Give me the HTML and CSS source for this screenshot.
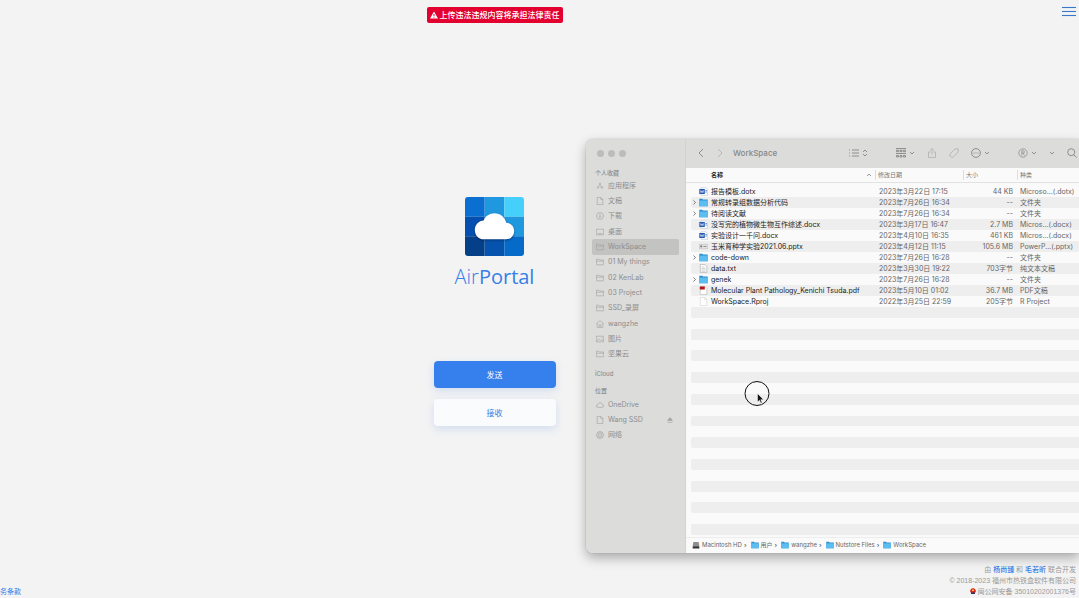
FILE: index.html
```
<!DOCTYPE html>
<html lang="zh-CN">
<head>
    <meta charset="UTF-8">
    <title>AirPortal</title>
    <link rel="stylesheet" href="styles.css">
</head>
<body>
<!-- 图标 -->
<svg class="sprite" aria-hidden="true">
    <symbol id="i-right" viewBox="0 0 6 10"><path d="M1 1l4 4-4 4"/></symbol>
    <symbol id="i-left" viewBox="0 0 6 10"><path d="M5 1L1 5l4 4"/></symbol>
    <symbol id="i-down" viewBox="0 0 6 10"><path d="M1 4l2 2 2-2"/></symbol>
    <symbol id="i-updown" viewBox="0 0 6 10"><path d="M1 4l2-2 2 2M1 6l2 2 2-2"/></symbol>
    <symbol id="i-list" viewBox="0 0 10 10"><path d="M3 2h7M3 5h7M3 8h7M0 2h1M0 5h1M0 8h1"/></symbol>
    <symbol id="i-group" viewBox="0 0 10 10"><path d="M0 .5h10M0 5.500h10"/><path d="M.5 2.200h2v1.500h-2zM4 2.200h2v1.500H4zM7.500 2.200h2v1.500h-2zM.5 7.500h2V9h-2zM4 7.500h2V9H4zM7.500 7.500h2V9h-2z"/></symbol>
    <symbol id="i-share" viewBox="0 0 10 10"><path d="M3.500 4H1.500v5.500h7V4H6.500M5 6.500V.7M3 2.500l2-2 2 2"/></symbol>
    <symbol id="i-tag" viewBox="0 0 10 10"><path d="M1 6l5-5 3-.2.3 3-5 5.200q-1 .8-2 0L1 8q-.8-1 0-2z"/></symbol>
    <symbol id="i-more" viewBox="0 0 10 10"><circle cx="5" cy="5" r="4.400"/><path d="M2.500 5h1M4.500 5h1M6.500 5h1"/></symbol>
    <symbol id="i-reg" viewBox="0 0 10 10"><circle cx="5" cy="5" r="4.200" stroke-width=".7"/><path stroke-width=".7" d="M3.800 7.500V2.700h1.400q1.200 0 1.200 1.200T5.200 5.100H3.800M5.200 5.100l1.300 2.400"/></symbol>
    <symbol id="i-search" viewBox="0 0 10 10"><circle cx="4.200" cy="4.200" r="3.500"/><path d="M6.800 6.800l2.800 2.800"/></symbol>
    <symbol id="i-app" viewBox="0 0 10 10"><path d="M5.600 1L2 8.500M4.400 1L8 8.500M.8 6.500h3M5.500 6.500h3.700"/></symbol>
    <symbol id="i-doc" viewBox="0 0 10 10"><path d="M1.500.5H6l2.500 2.500v6.500h-7zM6 .5V3h2.500"/></symbol>
    <symbol id="i-download" viewBox="0 0 10 10"><circle cx="5" cy="5" r="4.300"/><path d="M5 2.500v4.500M3.300 5.300L5 7l1.700-1.700"/></symbol>
    <symbol id="i-desktop" viewBox="0 0 10 10"><path d="M.5 1.500h9v7h-9zM2 7h6"/></symbol>
    <symbol id="i-folder" viewBox="0 0 10 10"><path d="M.5 8.500v-7h3l1 1h5v6zM.5 4h9"/></symbol>
    <symbol id="i-home" viewBox="0 0 10 10"><path d="M.3 5L5 .8 9.700 5M1.500 4v5.200h7V4M4 9V6h2v3"/></symbol>
    <symbol id="i-image" viewBox="0 0 10 10"><path d="M.5 1.500h9v7h-9zM.5 8l3-3 2 2 1.500-1.500 2.500 2.500M7 3.500h1"/></symbol>
    <symbol id="i-cloud" viewBox="0 0 10 10"><path d="M2.500 8q-2 0-2-1.800T2.500 4.500Q3 2 5.200 2T7.700 4.500q1.800 0 1.800 1.700T7.700 8z"/></symbol>
    <symbol id="i-globe" viewBox="0 0 10 10"><circle cx="5" cy="5" r="4.300"/><path stroke-width=".5" d="M1 5h8M5 1q-4 4 0 8M5 1q4 4 0 8M2 2.500q3 2 6 0M2 7.500q3-2 6 0"/></symbol>
    <symbol id="i-eject" viewBox="0 0 10 10"><path fill="#a2a2a2" d="M5 2l3 3.500H2z"/><path d="M2 8h6"/></symbol>
    <symbol id="f-folder" viewBox="0 0 9 9"><path fill="#2d8fd0" d="M.3.800h3l.8.8h4.600v6.600H.3z"/><path fill="#5cbdf0" d="M.3 2.600h8.400v5.600H.3z"/></symbol>
    <symbol id="f-word" viewBox="0 0 9 9"><path fill="#fff" stroke="#a9bad4" stroke-width=".5" d="M2 .8h5l1.500 1.500v6H2z"/><path fill="#2458b0" d="M.3 2h5.500v5H.3z"/><path fill="none" stroke="#fff" stroke-width=".6" d="M1.300 3.300l.8 2.400.9-2 .9 2 .8-2.400"/><path stroke="#2458b0" stroke-width=".6" d="M6.300 3.500H8M6.300 5H8"/></symbol>
    <symbol id="f-ppt" viewBox="0 0 9 9"><path fill="#e2e2e2" stroke="#aaa" stroke-width=".4" d="M.3 2.300h8.400v4.500H.3z"/><path fill="#777" d="M1.200 3.500h2v1.800h-2zM4.500 4h3v.8h-3z"/></symbol>
    <symbol id="f-text" viewBox="0 0 9 9"><path fill="#fff" stroke="#999" stroke-width=".5" d="M1.300.5h4.500l2 2v6H1.300z"/><path stroke="#aaa" stroke-width=".5" d="M2.500 3h3M2.500 4.500h4M2.500 6h4M2.500 7.300h4"/></symbol>
    <symbol id="f-pdf" viewBox="0 0 9 9"><path fill="#fff" stroke="#aaa" stroke-width=".5" d="M1.300.5h4.500l2 2v6H1.300z"/><path fill="#b3191d" d="M.8.500h5v3h-5z"/></symbol>
    <symbol id="f-blank" viewBox="0 0 9 9"><path fill="#fff" stroke="#ccc" stroke-width=".5" d="M1.300.5h4.500l2 2v6H1.300zM5.800.5v2h2"/></symbol>
    <symbol id="f-disk" viewBox="0 0 9 9"><path fill="#8b8f91" d="M1.500 1h6l.7 5H.8z"/><path fill="#333" d="M.8 6h7.400v2.300H.8z"/></symbol>
</svg>

<div class="page">
    <main class="portal">
        <div class="notice">
            <svg viewBox="0 0 8 8"><path fill="#fff" d="M4 .5l4 7H0z"/><path stroke="#e3002f" d="M4 3v2M4 5.700v.9"/></svg>
            上传违法违规内容将承担法律责任
        </div>
        <svg class="logo" viewBox="0 0 60 60">
            <clipPath id="round"><rect width="60" height="60" rx="3"/></clipPath>
            <g clip-path="url(#round)">
                <path fill="#0a6fd0" d="M0 0h20v20H0z"/>
                <path fill="#2098e0" d="M20 0h20v20H20z"/>
                <path fill="#45d0fb" d="M40 0h20v20H40z"/>
                <path fill="#054fae" d="M0 20h20v20H0z"/>
                <path fill="#0a70cf" d="M20 20h20v20H20z"/>
                <path fill="#2098de" d="M40 20h20v20H40z"/>
                <path fill="#053f88" d="M0 40h20v20H0z"/>
                <path fill="#0553ac" d="M20 40h20v20H20z"/>
                <path fill="#056ac8" d="M40 40h20v20H40z"/>
            </g>
            <path class="logo-cloud" d="M19 43C13.500 43 10 38.700 10 33.500s4-9.300 9-9.500C20.500 19.500 25 16.500 30 16.500c6 0 10.700 4.200 12 9.800C46.500 26.500 50 30 50 34.500S46.500 43 42 43z"/>
        </svg>
        <h1 class="brand"><span>Air</span>Portal</h1>
        <div class="actions">
            <button class="btn primary" type="button">发送</button>
            <button class="btn" type="button">接收</button>
        </div>
    </main>

    <button class="menu" type="button" aria-label="菜单"><i></i><i></i><i></i></button>

    <footer class="footer">
        <a href="#">务条款</a>
        <div class="copyright">
            <p>由 <a href="#">杨尚臻</a> 和 <a href="#">毛若昕</a> 联合开发</p>
            <p>© 2018-2023 福州市热铁盒软件有限公司</p>
            <p><svg viewBox="0 0 6 6"><path fill="#d5281f" d="M1 1l2-1 2 1 1 2-1 2H1L0 3z"/><path fill="#f0c04a" d="M2 1.500h2V3H2z"/><path fill="#26356b" d="M1 4.500h4V6H1z"/></svg> 闽公网安备 35010202001376号</p>
        </div>
    </footer>

    <!-- 访达窗口 -->
    <section class="finder">
        <aside class="sidebar">
            <div class="lights"><i></i><i></i><i></i></div>
            <h2>个人收藏</h2>
            <ul class="favorites">
                <li><svg><use href="#i-app"/></svg>应用程序</li>
                <li><svg><use href="#i-doc"/></svg>文稿</li>
                <li><svg><use href="#i-download"/></svg>下载</li>
                <li><svg><use href="#i-desktop"/></svg>桌面</li>
                <li class="current"><svg><use href="#i-folder"/></svg>WorkSpace</li>
                <li><svg><use href="#i-folder"/></svg>01 My things</li>
                <li><svg><use href="#i-folder"/></svg>02 KenLab</li>
                <li><svg><use href="#i-folder"/></svg>03 Project</li>
                <li><svg><use href="#i-folder"/></svg>SSD_录屏</li>
                <li><svg><use href="#i-home"/></svg>wangzhe</li>
                <li><svg><use href="#i-image"/></svg>图片</li>
                <li><svg><use href="#i-folder"/></svg>坚果云</li>
            </ul>
            <h2 class="icloud">iCloud</h2>
            <h2>位置</h2>
            <ul class="places">
                <li><svg><use href="#i-cloud"/></svg>OneDrive</li>
                <li><svg><use href="#i-doc"/></svg>Wang SSD<svg class="eject"><use href="#i-eject"/></svg></li>
                <li><svg><use href="#i-globe"/></svg>网络</li>
            </ul>
        </aside>

        <div class="content">
            <header class="toolbar">
                <button class="nav back" type="button" aria-label="后退"><svg class="slim"><use href="#i-left"/></svg></button>
                <button class="nav dim" type="button" aria-label="前进"><svg class="slim"><use href="#i-right"/></svg></button>
                <h2>WorkSpace</h2>
                <div class="tools">
                    <button type="button" aria-label="显示"><svg><use href="#i-list"/></svg><svg class="slim"><use href="#i-updown"/></svg></button>
                    <button class="apart" type="button" aria-label="群组"><svg><use href="#i-group"/></svg><svg class="slim"><use href="#i-down"/></svg></button>
                    <button class="dim" type="button" aria-label="共享"><svg><use href="#i-share"/></svg></button>
                    <button class="dim" type="button" aria-label="标签"><svg><use href="#i-tag"/></svg></button>
                    <button type="button" aria-label="操作"><svg><use href="#i-more"/></svg><svg class="slim"><use href="#i-down"/></svg></button>
                    <button class="apart" type="button" aria-label="注册"><svg><use href="#i-reg"/></svg><svg class="slim"><use href="#i-down"/></svg></button>
                    <button type="button" aria-label="更多"><svg class="slim"><use href="#i-down"/></svg></button>
                    <button type="button" aria-label="搜索"><svg><use href="#i-search"/></svg></button>
                </div>
            </header>

            <div class="files">
                <table>
                    <colgroup><col class="c-name"><col class="c-date"><col class="c-size"><col></colgroup>
                    <thead>
                    <tr><th class="sorted"><div>名称<svg viewBox="0 0 6 10"><path d="M1 6l2-2 2 2"/></svg></div></th><th>修改日期</th><th>大小</th><th>种类</th></tr>
                    </thead>
                    <tbody>
                    <tr><td><div><svg class="file"><use href="#f-word"/></svg>报告模板.dotx</div></td><td>2023年3月22日 17:15</td><td>44 KB</td><td>Microso...(.dotx)</td></tr>
                    <tr><td><div class="dir"><svg class="arrow"><use href="#i-right"/></svg><svg class="file"><use href="#f-folder"/></svg>常规转录组数据分析代码</div></td><td>2023年7月26日 16:34</td><td>--</td><td>文件夹</td></tr>
                    <tr><td><div class="dir"><svg class="arrow"><use href="#i-right"/></svg><svg class="file"><use href="#f-folder"/></svg>待阅读文献</div></td><td>2023年7月26日 16:34</td><td>--</td><td>文件夹</td></tr>
                    <tr><td><div><svg class="file"><use href="#f-word"/></svg>没写完的植物微生物互作综述.docx</div></td><td>2023年3月17日 16:47</td><td>2.7 MB</td><td>Micros...(.docx)</td></tr>
                    <tr><td><div><svg class="file"><use href="#f-word"/></svg>实验设计一千问.docx</div></td><td>2023年4月10日 16:35</td><td>461 KB</td><td>Micros...(.docx)</td></tr>
                    <tr><td><div><svg class="file"><use href="#f-ppt"/></svg>玉米育种学实验2021.06.pptx</div></td><td>2023年4月12日 11:15</td><td>105.6 MB</td><td>PowerP...(.pptx)</td></tr>
                    <tr><td><div class="dir"><svg class="arrow"><use href="#i-right"/></svg><svg class="file"><use href="#f-folder"/></svg>code-down</div></td><td>2023年7月26日 16:28</td><td>--</td><td>文件夹</td></tr>
                    <tr><td><div><svg class="file"><use href="#f-text"/></svg>data.txt</div></td><td>2023年3月30日 19:22</td><td>703字节</td><td>纯文本文稿</td></tr>
                    <tr><td><div class="dir"><svg class="arrow"><use href="#i-right"/></svg><svg class="file"><use href="#f-folder"/></svg>genek</div></td><td>2023年7月26日 16:28</td><td>--</td><td>文件夹</td></tr>
                    <tr><td><div><svg class="file"><use href="#f-pdf"/></svg>Molecular Plant Pathology_Kenichi Tsuda.pdf</div></td><td>2023年5月10日 01:02</td><td>36.7 MB</td><td>PDF文稿</td></tr>
                    <tr><td><div><svg class="file"><use href="#f-blank"/></svg>WorkSpace.Rproj</div></td><td>2022年3月25日 22:59</td><td>205字节</td><td>R Project</td></tr>
                    </tbody>
                </table>
                <!-- 空白行 -->
                <div class="blank">
                    <i></i><i></i><i></i><i></i><i></i><i></i><i></i>
                    <i></i><i></i><i></i><i></i><i></i><i></i><i></i>
                    <i></i><i></i><i></i><i></i><i></i><i></i><i></i>
                </div>
            </div>

            <nav class="path">
                <svg><use href="#f-disk"/></svg>Macintosh HD<b>›</b>
                <svg><use href="#f-folder"/></svg>用户<b>›</b>
                <svg><use href="#f-folder"/></svg>wangzhe<b>›</b>
                <svg><use href="#f-folder"/></svg>Nutstore Files<b>›</b>
                <svg><use href="#f-folder"/></svg>WorkSpace
            </nav>
        </div>
    </section>

    <svg class="cursor" viewBox="0 0 26 26">
        <circle cx="13" cy="12.500" r="12"/>
        <path d="M13.500 12.500V21l2-1.800 1.300 3 1.300-.6-1.300-2.900h2.700z"/>
    </svg>
</div>
</body>
</html>
```
FILE: styles.css
```
* {
    margin: 0;
    padding: 0;
    box-sizing: border-box;
}

body {
    background-color: #f3f3f3;
    font-family: Inter, "Noto Sans CJK SC", sans-serif;
    font-size: 7px;
    line-height: 10px;
}

ul {
    list-style: none;
}

a {
    color: #2f7de8;
    text-decoration: none;
}

button {
    border: none;
    background: none;
    color: inherit;
    font: inherit;
    cursor: pointer;
}

svg {
    display: block;
    flex: none;
    width: 10px;
    height: 10px;
}

.sprite {
    display: none;
}

.page {
    position: relative;
    display: flex;
    flex-direction: column;
    min-height: 100vh;
    overflow: hidden;
}

/*左侧主区域*/
.portal {
    display: flex;
    flex-direction: column;
    align-items: center;
    margin-right: 90px;
    padding-top: 7px;
}

.notice {
    display: flex;
    align-items: center;
    gap: 2px;
    height: 16px;
    padding: 0 3px;
    border-radius: 2px;
    background-color: #e3002f;
    color: #fff;
    font-size: 8px;
    font-weight: 500;
}

.notice svg {
    width: 8px;
    height: 8px;
}

.logo {
    width: 59px;
    height: 59px;
    margin-top: 174px;
}

.logo-cloud {
    fill: #fff;
    filter: drop-shadow(0 1px 1px rgba(0, 20, 70, .5));
}

.brand {
    margin-top: 7px;
    color: #3480e8;
    font: 400 20px/28px "Open Sans", sans-serif;
}

.brand span {
    font-weight: 300;
}

.actions {
    display: grid;
    gap: 11px;
    width: 122px;
    margin-top: 70px;
}

.btn {
    height: 27px;
    border-radius: 4px;
    background-color: #fafbfc;
    box-shadow: 0 3px 8px rgba(60, 130, 230, .18);
    color: #3480e8;
    font-size: 8px;
}

.btn.primary {
    background-color: #3580ed;
    color: #fff;
}

.menu {
    position: absolute;
    top: 7px;
    right: 3px;
    display: grid;
    gap: 3px;
    width: 14px;
}

.menu i {
    height: 1px;
    background-color: #3a78cc;
    box-shadow: 0 0 1px #8fb0dd;
}

.footer {
    display: flex;
    justify-content: space-between;
    align-items: flex-end;
    margin-top: auto;
    padding: 0 3px 1px 0;
    color: #9a9a9a;
    font-family: "Liberation Sans", "Noto Sans CJK SC", sans-serif;
    line-height: 11px;
}

.copyright {
    text-align: right;
}

.copyright a {
    font-weight: 500;
}

.copyright svg {
    display: inline-block;
    width: 6px;
    height: 6px;
}

/*窗口浮在页面上*/
.finder {
    position: absolute;
    top: 139px;
    right: 0;
    display: flex;
    width: 493px;
    height: 414px;
    border-radius: 7px 0 0 7px;
    background-color: #fafafa;
    box-shadow: 0 0 1px #888, 0 5px 12px rgba(0, 0, 0, .3);
    overflow: hidden;
}

.sidebar {
    width: 100px;
    padding: 11px 6px 0;
    border-right: 1px solid #d2d2d2;
    background-color: #dcdcdb;
    color: #8d8d8d;
}

.sidebar h2 {
    padding-left: 3px;
    font-size: 6px;
    font-weight: 500;
}

.lights {
    display: flex;
    gap: 4px;
    margin-bottom: 11px;
    padding-left: 5px;
}

.lights i {
    width: 7px;
    height: 7px;
    border-radius: 50%;
    background-color: #bcbcbc;
}

.favorites,
.places {
    display: grid;
    grid-auto-rows: 1fr;
}

.favorites {
    height: 184px;
}

.places {
    height: 46px;
    margin-top: 1px;
}

.sidebar li {
    display: flex;
    align-items: center;
    gap: 4px;
    padding-left: 4px;
    border-radius: 2px;
}

.sidebar li svg {
    width: 8px;
    height: 8px;
    fill: none;
    stroke: #a2a2a2;
    stroke-width: .8;
}

.sidebar li.current {
    background-color: #c3c3c2;
}

.sidebar li .eject {
    margin-left: auto;
    margin-right: 5px;
}

.sidebar .icloud {
    margin: 7px 0;
}

.content {
    flex: 1;
    display: flex;
    flex-direction: column;
    min-width: 0;
}

.toolbar {
    display: flex;
    align-items: center;
    height: 29px;
    padding: 0 2px 1px 12px;
    background-color: #dcdcdb;
    color: #868686;
}

.toolbar h2 {
    margin-left: 10px;
    font-size: 8px;
    font-weight: 500;
}

.toolbar svg {
    fill: none;
    stroke: currentColor;
    stroke-width: .9;
}

.toolbar .slim {
    width: 6px;
}

.toolbar .dim {
    color: #b4b4b4;
}

.nav.back {
    margin-right: 13px;
}

.tools {
    display: flex;
    gap: 12px;
    margin-left: auto;
}

.tools button {
    display: flex;
    gap: 3px;
}

.tools .apart {
    margin-left: 16px;
}

.files {
    flex: 1;
    display: flex;
    flex-direction: column;
    padding-left: 5px;
    background: linear-gradient(#e2e2e2, #e2e2e2) 0 14px / 100% 1px no-repeat;
}

table {
    width: 100%;
    border-spacing: 0;
    table-layout: fixed;
}

.c-name {
    width: 184px;
}

.c-date {
    width: 88px;
}

.c-size {
    width: 54px;
}

th {
    height: 18px;
    padding: 0 3px 4px;
    color: #777;
    font-size: 6px;
    font-weight: 400;
    text-align: left;
    background: linear-gradient(#ddd, #ddd) 0 2px / 1px 10px no-repeat;
}

th.sorted {
    padding-left: 20px;
    background: none;
    color: #222;
    font-weight: 600;
}

th div {
    display: flex;
    justify-content: space-between;
}

th svg {
    width: 6px;
    fill: none;
    stroke: #999;
}

td {
    height: 11px;
    padding: 0 3px;
    color: #666;
    white-space: nowrap;
}

td:first-child {
    padding: 0;
    border-radius: 2px 0 0 2px;
    color: #222;
}

td:nth-child(2) {
    padding-left: 4px;
}

td:nth-child(3) {
    padding-right: 4px;
    text-align: right;
}

td div {
    display: flex;
    align-items: center;
    gap: 3px;
    padding-left: 8px;
}

td div.dir {
    padding-left: 2px;
}

.arrow {
    width: 3px;
    height: 5px;
    fill: none;
    stroke: #555;
    stroke-width: 1.5;
}

.file {
    width: 9px;
    height: 9px;
}

tbody tr:nth-child(even) td,
.blank i:nth-child(odd) {
    background-color: #eee;
}

.blank {
    flex: 1;
    display: grid;
    grid-auto-rows: 1fr;
}

.blank i {
    border-radius: 2px 0 0 2px;
}

.path {
    display: flex;
    align-items: center;
    gap: 2px;
    height: 16px;
    margin-top: 2px;
    padding: 0 0 2px 6px;
    border-top: 1px solid #ededed;
    color: #666;
    font-size: 6px;
}

.path svg {
    width: 8px;
    height: 8px;
}

.path b {
    padding-right: 2px;
}

/*鼠标指针*/
.cursor {
    position: absolute;
    top: 381px;
    left: 744px;
    width: 26px;
    height: 26px;
    fill: none;
    stroke: #111;
    stroke-width: 1;
}

.cursor path {
    fill: #111;
    stroke: #fff;
    stroke-width: .5;
}
```
